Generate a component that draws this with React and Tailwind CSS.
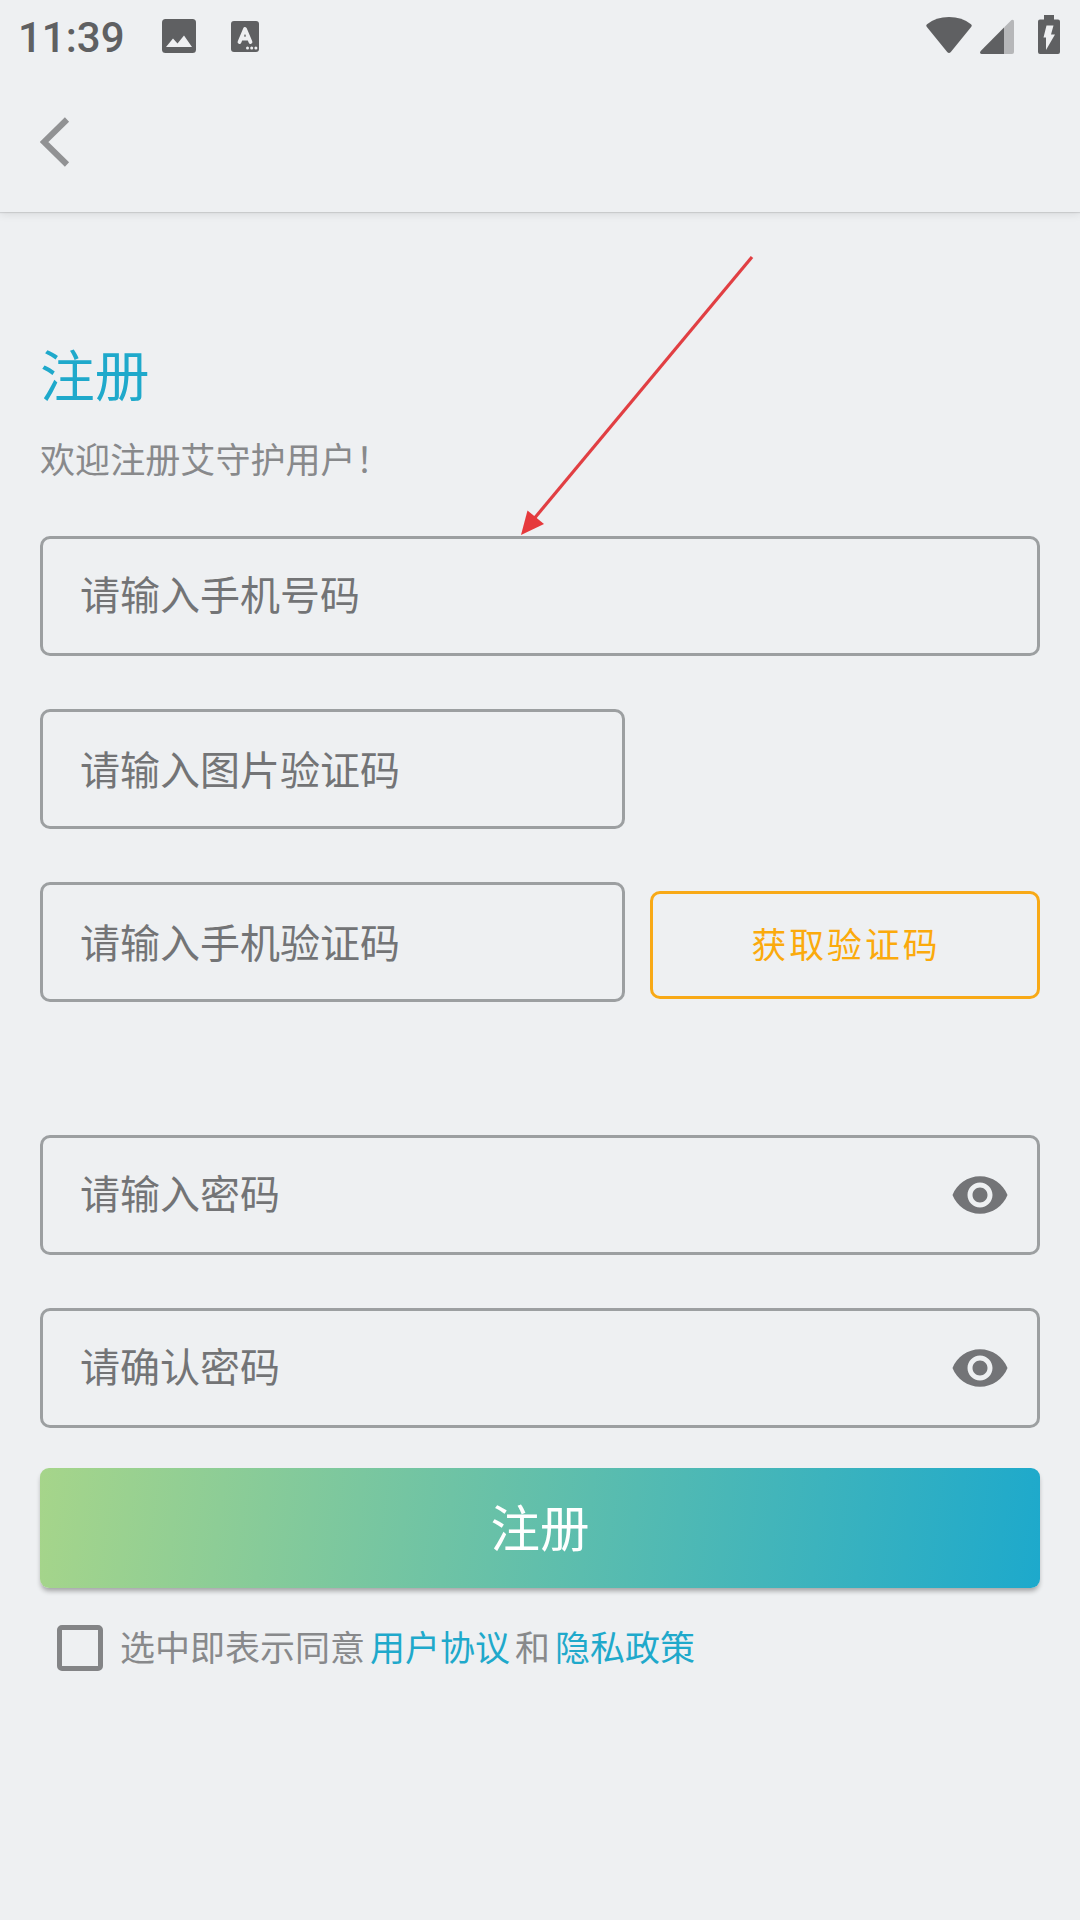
function Eye() {
  return (
    <svg className="h-[60px] w-[60px]" viewBox="0 0 24 24" fill="#737477">
      <path d="M12 4.5C7 4.5 2.73 7.61 1 12c1.73 4.39 6 7.5 11 7.5s9.27-3.11 11-7.5c-1.73-4.39-6-7.5-11-7.5zM12 17c-2.76 0-5-2.24-5-5s2.240-5 5-5 5 2.240 5 5-2.240 5-5 5zm0-8c-1.66 0-3 1.340-3 3s1.340 3 3 3 3-1.340 3-3-1.340-3-3-3z" />
    </svg>
  );
}

function Field({ text, narrow, eye }) {
  return (
    <div
      className={`flex h-[120px] items-center justify-between rounded-[10px] border-[3px] border-[#9c9fa1] pl-[37px] pr-[27px] ${narrow ? "w-[585px]" : "w-full"}`}
    >
      <span className={`text-[40px] leading-[60px] text-[#737476] ${narrow ? "mb-[2px]" : "mb-[6px]"}`}>{text}</span>
      {eye && <Eye />}
    </div>
  );
}

function StatusBar() {
  return (
    <div className="flex h-[72px] justify-between">
      <div className="flex">
        <span className="ml-[18px] w-[144px] font-[Roboto] text-[42px] leading-[76px] font-medium text-[#5f6062]">11:39</span>
        <svg className="mt-[19px] h-[34px] w-[34px]" viewBox="0 0 34 34">
          <rect width="34" height="34" rx="3.500" fill="#5f6062" />
          <path d="M4 28L11 19.500L15.500 24.500L22 16.500L30 28Z" fill="#eeeff1" />
        </svg>
        <svg className="mt-[21px] ml-[35px] h-[31px] w-[28px]" viewBox="0 0 28 31">
          <rect width="28" height="31" rx="3" fill="#5f6062" />
          <path d="M8.500 21L14 8L19.500 21M10 17.500H18" fill="none" stroke="#eeeff1" strokeWidth="3.800" strokeLinecap="round" strokeLinejoin="round" />
          <g fill="#eeeff1">
            <circle cx="16.500" cy="27" r="1.500" />
            <circle cx="20.700" cy="27" r="1.500" />
            <circle cx="24.900" cy="27" r="1.500" />
          </g>
        </svg>
      </div>
      <div className="flex pr-5">
        <svg className="mt-[17px] h-9 w-[46px]" viewBox="0 0 46 36" fill="#5f6062">
          <path d="M1 7.200Q10 0 23 0T45 7.200Q46.300 8.300 45.300 9.800L24.800 35Q23 37 21.200 35L.700 9.800Q-.300 8.300 1 7.200Z" />
        </svg>
        <svg className="mt-[19px] ml-2 h-[35px] w-[34px]" viewBox="0 0 34 35">
          <path d="M31.500 1Q34 0 34 2.500V33Q34 35 32 35H24V8.500Z" fill="#b6b7b9" />
          <path d="M24 8.500V35H1.500Q-1 34.500 .700 32Z" fill="#5f6062" />
        </svg>
        <svg className="mt-[15px] ml-6 h-[39px] w-[22px]" viewBox="0 0 22 39">
          <path d="M6 0H16V4.500H20Q22 4.500 22 6.500V37Q22 39 20 39H2Q0 39 0 37V6.500Q0 4.500 2 4.500H6Z" fill="#5f6062" />
          <path d="M8.500 10.500H15.500L13 19.500H17L8 35V22.500H5.500Z" fill="#eeeff1" />
        </svg>
      </div>
    </div>
  );
}

export default function App() {
  return (
    <div className="relative h-[1920px] w-[1080px] overflow-hidden bg-[#eef0f2] font-['Noto_Sans_CJK_SC',sans-serif]">
      <header className="h-[212px] shadow-[0_1px_1px_rgba(0,0,0,0.1),0_3px_8px_rgba(0,0,0,0.08)]">
        <StatusBar />
        <svg className="mt-[45px] ml-10 h-[50px] w-[30px]" viewBox="0 0 30 50">
          <path d="M27 2.500L4 25L27 47.500" fill="none" stroke="#919294" strokeWidth="6" />
        </svg>
      </header>
      <main className="px-10 pt-[120px]">
        <h1 className="h-20 text-[54.800px] leading-[80px] text-[#1fa9cb]">注册</h1>
        <p className="mt-[19px] h-[54px] text-[35.100px] leading-[54px] text-[#88898b]">欢迎注册艾守护用户！</p>
        <div className="mt-[51px] flex flex-col gap-[53px]">
          <Field text="请输入手机号码" />
          <Field text="请输入图片验证码" narrow />
          <div className="flex items-center justify-between">
            <Field text="请输入手机验证码" narrow />
            <button className="mt-[6px] h-[108px] w-[390px] rounded-[10px] border-[3px] border-[#f8a916] pb-[3px] pl-[2px] text-[34.800px] tracking-[3px] text-[#fbaa0c]">获取验证码</button>
          </div>
        </div>
        <div className="mt-[133px] flex flex-col gap-[53px]">
          <Field text="请输入密码" eye />
          <Field text="请确认密码" eye />
        </div>
        <button className="mt-10 block h-[120px] w-full rounded-[9px] bg-linear-[97deg,#a6d58a,#1da9cc] pb-1 text-[49.500px] text-white shadow-[0_4px_5px_-1px_rgba(0,0,0,0.32)]">注册</button>
        <div className="mt-[33px] flex h-[54px] items-center text-[35px] leading-[54px] whitespace-nowrap text-[#88898b]">
          <span className="ml-[17px] h-[46px] w-[46px] rounded-[5px] border-[5px] border-[#838486]" />
          <span className="mb-[4px] ml-[17px]">选中即表示同意</span>
          <span className="mb-[4px] ml-[5px] text-[#1fa9cb]">用户协议</span>
          <span className="mb-[4px] ml-[5px]">和</span>
          <span className="mb-[4px] ml-[5px] text-[#1fa9cb]">隐私政策</span>
        </div>
      </main>
      <svg className="pointer-events-none absolute top-[250px] left-[515px] h-[290px] w-[245px]" viewBox="515 250 245 290">
        <path d="M752 257L533 520" stroke="#e13f43" strokeWidth="3.200" />
        <path d="M521 535L527.500 510.500L544 524Z" fill="#e6393c" />
      </svg>
    </div>
  );
}
